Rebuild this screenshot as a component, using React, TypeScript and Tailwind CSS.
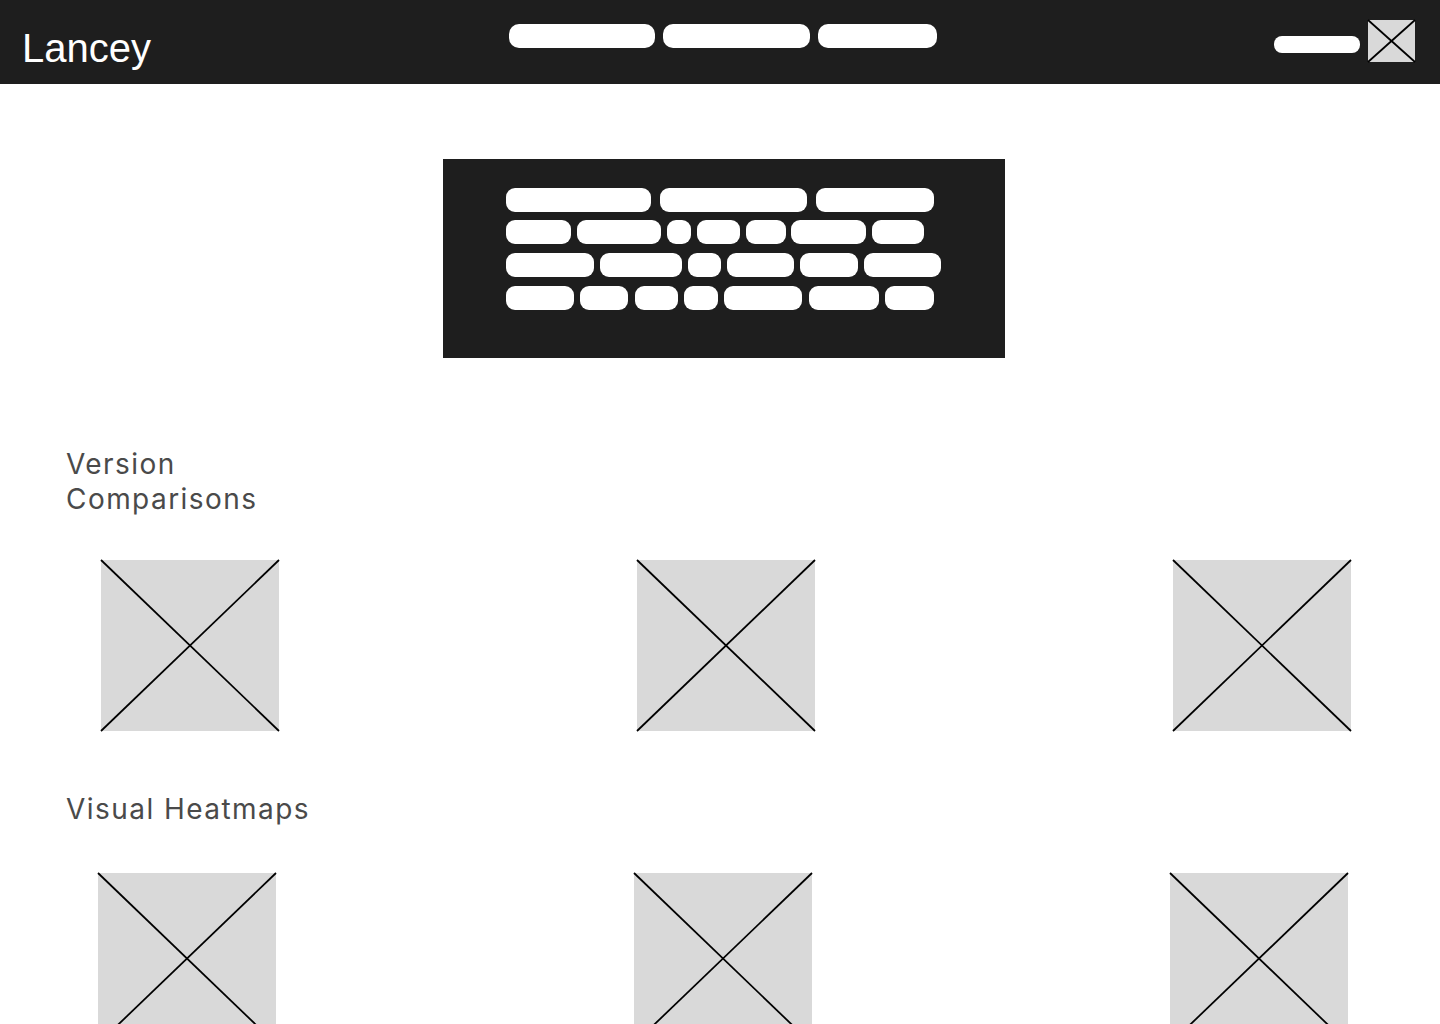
function Placeholder({ className }: { className: string }) {
  return (
    <div className={`bg-[#d9d9d9] ${className}`}>
      <svg className="block h-full w-full overflow-visible" viewBox="0 0 100 100" preserveAspectRatio="none">
        <line x1="0" y1="0" x2="100" y2="100" stroke="#000" strokeWidth="1.75" vectorEffect="non-scaling-stroke" />
        <line x1="100" y1="0" x2="0" y2="100" stroke="#000" strokeWidth="1.75" vectorEffect="non-scaling-stroke" />
      </svg>
    </div>
  );
}

const heroRows = [
  ["ml-0 w-[145px]", "ml-[9px] w-[147px]", "ml-[9px] w-[118px]"],
  ["ml-0 w-[65px]", "ml-[6px] w-[84px]", "ml-[6px] w-[24px]", "ml-[6px] w-[43px]", "ml-[6px] w-[40px]", "ml-[5px] w-[75px]", "ml-[6px] w-[52px]"],
  ["ml-0 w-[88px]", "ml-[6px] w-[82px]", "ml-[6px] w-[33px]", "ml-[6px] w-[67px]", "ml-[6px] w-[58px]", "ml-[6px] w-[77px]"],
  ["ml-0 w-[68px]", "ml-[6px] w-[48px]", "ml-[7px] w-[43px]", "ml-[6px] w-[34px]", "ml-[6px] w-[78px]", "ml-[7px] w-[70px]", "ml-[6px] w-[49px]"],
];

const rowGaps = ["mt-0", "mt-[8px]", "mt-[9px]", "mt-[9px]"];

export default function App() {
  return (
    <div className="min-h-screen bg-white font-['Liberation_Sans',Arial,sans-serif]">
      <header className="flex h-[84px] items-start bg-[#1e1e1e]">
        <div className="ml-[22px] mt-[28px] w-[461px] text-[40px] leading-none text-white">Lancey</div>
        <nav className="ml-[26px] mt-[24px] flex gap-[8px]">
          <span className="h-[24px] w-[146px] rounded-[10px] bg-white" />
          <span className="h-[24px] w-[147px] rounded-[10px] bg-white" />
          <span className="h-[24px] w-[119px] rounded-[10px] bg-white" />
        </nav>
        <div className="ml-auto mr-[25px] mt-[20px] flex items-start">
          <span className="mt-[16px] h-[17px] w-[86px] rounded-[8px] bg-white" />
          <Placeholder className="ml-[8px] h-[42px] w-[47px]" />
        </div>
      </header>

      <main>
        <section className="mt-[75px] flex justify-center pl-[8px]">
          <div className="h-[199px] w-[562px] bg-[#1e1e1e] pl-[63px] pt-[29px]">
            {heroRows.map((row, i) => (
              <div key={i} className={`flex ${rowGaps[i]}`}>
                {row.map((cls, j) => (
                  <span key={j} className={`h-[24px] rounded-[9px] bg-white ${cls}`} />
                ))}
              </div>
            ))}
          </div>
        </section>

        <h2 className="ml-[66px] mt-[89px] text-[28px] leading-[35px] tracking-[1.45px] text-[#4a4a4a] font-['Inter',sans-serif]">
          Version
          <br />
          Comparisons
        </h2>
        <div className="mt-[43px] flex gap-[358px] pl-[101px]">
          <Placeholder className="h-[171px] w-[178px]" />
          <Placeholder className="h-[171px] w-[178px]" />
          <Placeholder className="h-[171px] w-[178px]" />
        </div>

        <h2 className="ml-[66px] mt-[61px] text-[28px] leading-[35px] tracking-[1.45px] text-[#4a4a4a] font-['Inter',sans-serif]">
          Visual Heatmaps
        </h2>
        <div className="mt-[46px] flex gap-[358px] pl-[98px]">
          <Placeholder className="h-[171px] w-[178px]" />
          <Placeholder className="h-[171px] w-[178px]" />
          <Placeholder className="h-[171px] w-[178px]" />
        </div>
      </main>
    </div>
  );
}
